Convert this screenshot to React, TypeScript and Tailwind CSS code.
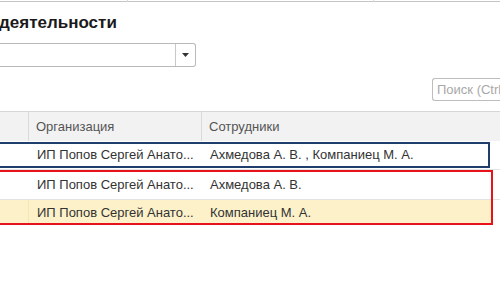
import React from "react";

export default function App() {
  const font = { fontFamily: '"Liberation Sans", Arial, sans-serif' };
  return (
    <div className="relative w-[500px] h-[300px] overflow-hidden bg-white" style={font}>
      {/* top line */}
      <div className="relative h-[3px]">
        <div className="absolute left-0 right-0 top-[1px] h-px bg-[#c4c4c4]" />
        <div className="absolute left-[127px] top-0 h-[2px] w-px bg-[#d8d8d8]" />
        <div className="absolute left-[373px] top-0 h-[2px] w-px bg-[#d8d8d8]" />
      </div>

      {/* title */}
      <div className="mt-[10px] h-[20px] leading-[20px] text-[17px] font-bold text-[#1a1a1a] -ml-px">
        деятельности
      </div>

      {/* combo box */}
      <div className="mt-[10px] flex h-[24px] w-[196px] rounded-r-[3px] border border-l-0 border-[#b9b9b9] bg-white">
        <div className="flex-1" />
        <div className="flex w-[20px] items-center justify-center border-l border-[#c8c8c8]">
          <svg width="7" height="4" viewBox="0 0 7 4">
            <path d="M0 0 L7 0 L3.5 4 Z" fill="#333" />
          </svg>
        </div>
      </div>

      {/* search */}
      <div className="mt-[11px] flex justify-end">
        <div className="flex h-[23px] w-[68px] items-center rounded-l-[3px] border border-r-0 border-[#bdbdbd] pl-[4px] text-[13px] text-[#a8a8a8] whitespace-nowrap overflow-hidden">
          Поиск (Ctrl+F)
        </div>
      </div>

      {/* table */}
      <div className="relative mt-[10px] text-[13px]">
        {/* header */}
        <div className="flex h-[30px] border-t border-[#d6d6d6] bg-[#f2f2f2] text-[#555]">
          <div className="w-[29px] border-r border-[#dadada]" />
          <div className="flex w-[173px] items-center border-r border-[#dadada] pl-[7px]">Организация</div>
          <div className="flex flex-1 items-center pl-[7px]">Сотрудники</div>
        </div>

        {/* row 1 */}
        <div className="flex h-[29px] border-b border-[#e3e3e3] text-[#333]">
          <div className="w-[29px]" />
          <div className="flex w-[173px] items-center pl-[8px] whitespace-nowrap">ИП Попов Сергей Анато...</div>
          <div className="flex flex-1 items-center pl-[8px] whitespace-nowrap">Ахмедова А. В. , Компаниец М. А.</div>
        </div>

        {/* row 2 */}
        <div className="flex h-[30px] border-b border-[#e3e3e3] text-[#333]">
          <div className="w-[29px]" />
          <div className="flex w-[173px] items-center pl-[8px] whitespace-nowrap">ИП Попов Сергей Анато...</div>
          <div className="flex flex-1 items-center pl-[8px] whitespace-nowrap">Ахмедова А. В.</div>
        </div>

        {/* row 3 */}
        <div className="flex h-[25px] w-[492px] bg-[#fcf1c9] text-[#333]">
          <div className="w-[29px] border-r border-[#f3e6b8]" />
          <div className="flex w-[173px] items-center pl-[8px] whitespace-nowrap">ИП Попов Сергей Анато...</div>
          <div className="flex flex-1 items-center pl-[8px] whitespace-nowrap">Компаниец М. А.</div>
        </div>

        {/* blue selection box overlay */}
        <div className="pointer-events-none absolute left-[-4px] top-[31px] h-[26px] w-[494px] border-2 border-[#1f3e6c]" />
        {/* red selection box overlay */}
        <div className="pointer-events-none absolute left-[-4px] top-[59px] h-[55px] w-[497px] border-2 border-[#e8121b]" />
      </div>
    </div>
  );
}
